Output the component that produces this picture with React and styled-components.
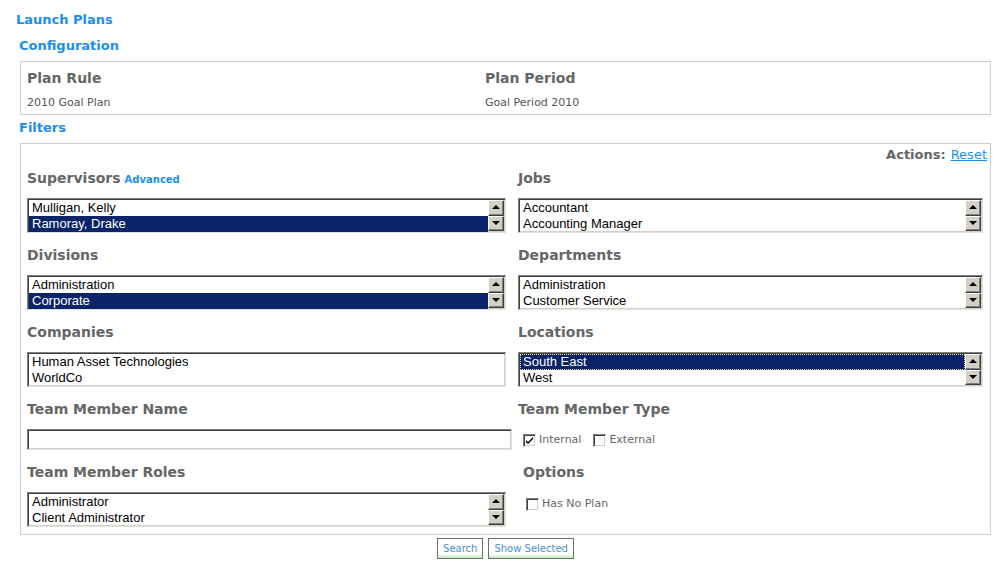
import React from 'react'
import styled, { createGlobalStyle } from 'styled-components'

const GlobalStyle = createGlobalStyle`
  body {
    margin: 0;
    background: #fff;
    font-family: "DejaVu Sans", Verdana, sans-serif;
  }
`

const Page = styled.div`
  padding: 12px 0 0 16px;
  width: 1003px;
  box-sizing: border-box;
`

const Title = styled.div`
  font: bold 13px/16px "DejaVu Sans", Verdana, sans-serif;
  color: #1b8fef;
  margin-left: ${(p) => p.$indent || 0}px;
  margin-top: ${(p) => p.$top || 0}px;
  margin-bottom: ${(p) => p.$gap || 0}px;
`

const Box = styled.div`
  margin-left: 4px;
  width: 971px;
  box-sizing: border-box;
  border: 1px solid #cfcfcf;
  background: #fff;
`

const ConfigGrid = styled.div`
  display: grid;
  grid-template-columns: 458px 1fr;
  padding: 6px 6px 4px 6px;
`

const Heading = styled.div`
  font: bold 14px/20px "DejaVu Sans", Verdana, sans-serif;
  color: #666;
  margin-left: ${(p) => p.$indent || 0}px;
  margin-bottom: ${(p) => (p.$gap === undefined ? 10 : p.$gap)}px;
  white-space: nowrap;
`

const SmallLink = styled.span`
  font: bold 10px "DejaVu Sans", Verdana, sans-serif;
  color: #1b8fef;
  margin-left: 4px;
`

const Value = styled.div`
  font: 11px/14px "DejaVu Sans", Verdana, sans-serif;
  color: #555;
`

const FilterBox = styled(Box)`
  padding: 3px 7px 7px 6px;
`

const ActionsRow = styled.div`
  display: flex;
  justify-content: flex-end;
  align-items: baseline;
  gap: 5px;
  margin-right: -4px;
  font: bold 13px/16px "DejaVu Sans", Verdana, sans-serif;
  color: #666;
  margin-bottom: 5px;
`

const ResetLink = styled.a`
  font-weight: normal;
  color: #1b8fef;
  text-decoration: underline;
`

const FilterGrid = styled.div`
  display: grid;
  grid-template-columns: 485px 1fr;
  column-gap: 6px;
  row-gap: 12px;
`

const Field = styled.div`
  display: flex;
  flex-direction: column;
  min-width: 0;
`

const ListFrame = styled.div`
  display: flex;
  width: ${(p) => p.$width || '100%'};
  height: 35px;
  box-sizing: border-box;
  border: 1px solid;
  border-color: #808080 #e4e2dc #e4e2dc #808080;
  box-shadow: inset 1px 1px #404040, inset -1px -1px #d4d0c8;
  padding: 1px;
  background: #fff;
`

const Rows = styled.div`
  flex: 1;
  min-width: 0;
`

const Row = styled.div`
  font: 13px/16px "Liberation Sans", Arial, sans-serif;
  padding-left: 3px;
  height: 16px;
  box-sizing: border-box;
  white-space: nowrap;
  color: ${(p) => (p.$selected ? '#fff' : '#000')};
  background: ${(p) => (p.$selected ? '#0a246a' : 'transparent')};
  outline: ${(p) => (p.$focus ? '1px dotted #f0e68c' : 'none')};
  outline-offset: -1px;
`

const ScrollCol = styled.div`
  width: 16px;
  display: flex;
  flex-direction: column;
`

const ScrollBtn = styled.div`
  flex: 1;
  display: flex;
  align-items: center;
  justify-content: center;
  background: #d4d0c8;
  box-sizing: border-box;
  border: 1px solid;
  border-color: #fff #404040 #404040 #fff;
  box-shadow: inset -1px -1px #808080;
`

const Arrow = styled.div`
  width: 0;
  height: 0;
  border-left: 4px solid transparent;
  border-right: 4px solid transparent;
  ${(p) => (p.$down ? 'border-top: 4px solid #000;' : 'border-bottom: 4px solid #000;')}
  margin-top: ${(p) => (p.$down ? '0' : '-2px')};
`

const TextInput = styled.input`
  width: 485px;
  height: 21px;
  box-sizing: border-box;
  border: 1px solid;
  border-color: #808080 #e4e2dc #e4e2dc #808080;
  box-shadow: inset 1px 1px #404040, inset -1px -1px #d4d0c8;
  outline: none;
  padding: 0 3px;
`

const CheckRow = styled.div`
  display: flex;
  align-items: center;
  gap: 12px;
  margin-left: ${(p) => p.$indent || 0}px;
  margin-top: ${(p) => p.$top || 0}px;
`

const CheckLabel = styled.label`
  display: flex;
  align-items: center;
  gap: 3px;
  font: 11px/14px "DejaVu Sans", Verdana, sans-serif;
  color: #666;
`

const CheckBox = styled.span`
  width: 13px;
  height: 13px;
  box-sizing: border-box;
  border: 1px solid;
  border-color: #808080 #fff #fff #808080;
  box-shadow: inset 1px 1px #404040, inset -1px -1px #d4d0c8;
  background: #fff;
  display: flex;
  align-items: center;
  justify-content: center;
`

const ButtonRow = styled.div`
  display: flex;
  justify-content: center;
  gap: 5px;
  width: 971px;
  margin-left: 4px;
  margin-top: 3px;
`

const Button = styled.button`
  height: 21px;
  padding: 0 5px;
  border: 1px solid #6f6f6f;
  background: linear-gradient(to bottom, #fff 0%, #fff 80%, #b8ecb0 100%);
  font: 10px "DejaVu Sans", Verdana, sans-serif;
  color: #4a8fd4;
  cursor: pointer;
`

function ListBox({ items, selected, focus, scroll = true, width }) {
  return (
    <ListFrame $width={width}>
      <Rows>
        {items.map((item, i) => (
          <Row key={item} $selected={selected === i} $focus={focus && selected === i}>
            {item}
          </Row>
        ))}
      </Rows>
      {scroll && (
        <ScrollCol>
          <ScrollBtn><Arrow /></ScrollBtn>
          <ScrollBtn><Arrow $down /></ScrollBtn>
        </ScrollCol>
      )}
    </ListFrame>
  )
}

function Check({ label, checked }) {
  return (
    <CheckLabel>
      <CheckBox>
        {checked && (
          <svg width="9" height="9" viewBox="0 0 9 9">
            <path d="M1 4 L3 6 L8 1 L8 3 L3 8 L1 6 Z" fill="#000" />
          </svg>
        )}
      </CheckBox>
      {label}
    </CheckLabel>
  )
}

export default function App() {
  return (
    <>
      <GlobalStyle />
      <Page>
        <Title $gap={10}>Launch Plans</Title>
        <Title $indent={3} $gap={7}>Configuration</Title>
        <Box>
          <ConfigGrid>
            <div>
              <Heading $gap={8}>Plan Rule</Heading>
              <Value>2010 Goal Plan</Value>
            </div>
            <div>
              <Heading $gap={8}>Plan Period</Heading>
              <Value>Goal Period 2010</Value>
            </div>
          </ConfigGrid>
        </Box>
        <Title $indent={3} $top={5} $gap={7}>Filters</Title>
        <FilterBox>
          <ActionsRow>
            Actions: <ResetLink href="#">Reset</ResetLink>
          </ActionsRow>
          <FilterGrid>
            <Field>
              <Heading>
                Supervisors<SmallLink>Advanced</SmallLink>
              </Heading>
              <ListBox width="479px" items={['Mulligan, Kelly', 'Ramoray, Drake']} selected={1} />
            </Field>
            <Field>
              <Heading>Jobs</Heading>
              <ListBox items={['Accountant', 'Accounting Manager']} />
            </Field>
            <Field>
              <Heading>Divisions</Heading>
              <ListBox width="479px" items={['Administration', 'Corporate']} selected={1} />
            </Field>
            <Field>
              <Heading>Departments</Heading>
              <ListBox items={['Administration', 'Customer Service']} />
            </Field>
            <Field>
              <Heading>Companies</Heading>
              <ListBox width="479px" items={['Human Asset Technologies', 'WorldCo']} scroll={false} />
            </Field>
            <Field>
              <Heading>Locations</Heading>
              <ListBox items={['South East', 'West']} selected={0} focus />
            </Field>
            <Field>
              <Heading>Team Member Name</Heading>
              <TextInput type="text" />
            </Field>
            <Field>
              <Heading>Team Member Type</Heading>
              <CheckRow $indent={5} $top={4}>
                <Check label="Internal" checked />
                <Check label="External" />
              </CheckRow>
            </Field>
            <Field>
              <Heading>Team Member Roles</Heading>
              <ListBox width="479px" items={['Administrator', 'Client Administrator']} />
            </Field>
            <Field>
              <Heading $indent={5}>Options</Heading>
              <CheckRow $indent={8} $top={5}>
                <Check label="Has No Plan" />
              </CheckRow>
            </Field>
          </FilterGrid>
        </FilterBox>
        <ButtonRow>
          <Button>Search</Button>
          <Button>Show Selected</Button>
        </ButtonRow>
      </Page>
    </>
  )
}
